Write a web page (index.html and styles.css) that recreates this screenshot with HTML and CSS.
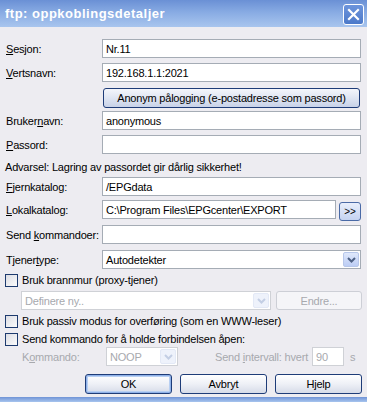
FILE: index.html
```html
<!DOCTYPE html>
<html lang="no">
<head>
  <meta charset="UTF-8">
  <title>ftp: oppkoblingsdetaljer</title>
  <link rel="stylesheet" href="styles.css">
</head>
<body>
  <div class="vindu">
    <div class="tittel">
      <span class="tittel-tekst">ftp: oppkoblingsdetaljer</span>
      <span class="lukk">
        <svg width="13" height="13" viewBox="0 0 13 13"><path d="M2 2 L11 11 M11 2 L2 11" stroke="#fff" stroke-width="2.2" stroke-linecap="square"/></svg>
      </span>
    </div>

    <div class="innhold">
      <div class="rad r-forste">
        <label class="etikett"><u>S</u>esjon:</label>
        <div class="felt">Nr.11</div>
      </div>

      <div class="rad">
        <label class="etikett"><u>V</u>ertsnavn:</label>
        <div class="felt">192.168.1.1:2021</div>
      </div>

      <div class="rad r-anonym">
        <span class="etikett"></span>
        <button class="knapp anonym">Anonym pålogging (e-postadresse som passord)</button>
      </div>

      <div class="rad r-tett">
        <label class="etikett">Bruker<u>n</u>avn:</label>
        <div class="felt">anonymous</div>
      </div>

      <div class="rad">
        <label class="etikett"><u>P</u>assord:</label>
        <div class="felt"></div>
      </div>

      <div class="advarsel">Advarsel: Lagring av passordet gir dårlig sikkerhet!</div>

      <div class="rad r-null">
        <label class="etikett"><u>F</u>jernkatalog:</label>
        <div class="felt">/EPGdata</div>
      </div>

      <div class="rad r-lokal">
        <label class="etikett"><u>L</u>okalkatalog:</label>
        <div class="felt kort">C:\Program Files\EPGcenter\EXPORT</div>
        <button class="knapp bla">&gt;&gt;</button>
      </div>

      <div class="rad r-seks">
        <label class="etikett">Send <u>k</u>ommandoer:</label>
        <div class="felt"></div>
      </div>

      <div class="rad r-seks">
        <label class="etikett">Tjener<u>t</u>ype:</label>
        <div class="felt valg">
          <span class="valg-tekst">Autodetekter</span>
          <span class="pil">
            <svg width="9" height="6" viewBox="0 0 9 6"><path d="M1 1 L4.5 4.5 L8 1" fill="none" stroke="#4d6185" stroke-width="2"/></svg>
          </span>
        </div>
      </div>

      <div class="sjekk r-brannmur">
        <span class="boks"></span>
        <span>Bruk brannmur (proxy-tjener)</span>
      </div>

      <div class="rad r-definere">
        <div class="felt valg av definere">
          <span class="valg-tekst">Definere ny..</span>
          <span class="pil av">
            <svg width="9" height="6" viewBox="0 0 9 6"><path d="M1 1 L4.5 4.5 L8 1" fill="none" stroke="#c3cee4" stroke-width="2"/></svg>
          </span>
        </div>
        <button class="knapp deaktiv endre">Endre...</button>
      </div>

      <div class="sjekk r-passiv">
        <span class="boks"></span>
        <span>Bruk passiv modus for overføring (som en WWW-leser)</span>
      </div>

      <div class="sjekk r-hold">
        <span class="boks"></span>
        <span>Send kommando for å holde forbindelsen åpen:</span>
      </div>

      <div class="rad r-kommando">
        <label class="etikett grå k-etikett">K<u>o</u>mmando:</label>
        <div class="felt valg av noop">
          <span class="valg-tekst">NOOP</span>
          <span class="pil av">
            <svg width="9" height="6" viewBox="0 0 9 6"><path d="M1 1 L4.5 4.5 L8 1" fill="none" stroke="#c3cee4" stroke-width="2"/></svg>
          </span>
        </div>
        <label class="grå intervall">Send <u>i</u>ntervall: hvert</label>
        <div class="felt av sekunder">90</div>
        <span class="grå enhet">s</span>
      </div>

      <div class="knapperad">
        <button class="knapp standard">OK</button>
        <button class="knapp">Avbryt</button>
        <button class="knapp">Hjelp</button>
      </div>
    </div>
    <div class="bunn"></div>
  </div>
</body>
</html>
```

FILE: styles.css
```css
body {
  margin: 0;
  background: #edecf1;
  font-family: 'Liberation Sans', Arial, sans-serif;
  font-size: 11px;
  letter-spacing: -0.2px;
  color: #000;
}

.vindu {
  width: 367px;
  height: 402px;
  display: flex;
  flex-direction: column;
  background: #edecf1;
}

.tittel {
  height: 27px;
  display: flex;
  align-items: center;
  justify-content: space-between;
  padding: 0 3px 0 5px;
  box-sizing: border-box;
  background: linear-gradient(#6a90d5, #88abe3 45%, #a8c5ee);
}

.tittel-tekst {
  color: #fff;
  font-weight: bold;
  font-size: 13px;
  letter-spacing: 0.5px;
}

.lukk {
  width: 19px;
  height: 19px;
  border: 1px solid #fff;
  border-radius: 3px;
  background: linear-gradient(#6d95dc, #4c79c9);
  display: flex;
  align-items: center;
  justify-content: center;
  margin-top: 1px;
}

.innhold {
  flex: 1;
  padding: 0 6px 0 5px;
  display: flex;
  flex-direction: column;
}

.rad {
  display: flex;
  align-items: center;
  height: 19px;
  margin-top: 5px;
  white-space: nowrap;
}

.r-forste { margin-top: 12px; }
.r-anonym { margin-top: 6px; height: 20px; }
.r-tett { margin-top: 3px; }
.r-null { margin-top: 0; }
.r-lokal { margin-top: 4px; }
.r-seks { margin-top: 6px; }

.etikett {
  width: 96px;
  flex: none;
  padding-left: 1px;
}

.felt {
  flex: 1;
  height: 19px;
  box-sizing: border-box;
  border: 1px solid #a5acb5;
  background: #fff;
  padding: 0 3px;
  display: flex;
  align-items: center;
  white-space: nowrap;
  overflow: hidden;
}

.felt.kort {
  flex: none;
  width: 234px;
}

.valg {
  padding-right: 1px;
}

.valg-tekst {
  flex: 1;
}

.pil {
  width: 16px;
  height: 15px;
  box-sizing: border-box;
  border: 1px solid #b7c7ea;
  border-radius: 2px;
  background: linear-gradient(#dfe8fb, #bccdf5);
  display: flex;
  align-items: center;
  justify-content: center;
}

.pil.av {
  border-color: #e3e9f6;
  background: #eef2fb;
}

.felt.av {
  border-color: #cfd1d6;
  color: #a7a9ae;
}

.advarsel {
  height: 20px;
  margin-top: 3px;
  display: flex;
  align-items: center;
}

.knapp {
  font-family: inherit;
  font-size: 11px;
  letter-spacing: -0.2px;
  color: #000;
  height: 20px;
  box-sizing: border-box;
  border: 1px solid #1e3c78;
  border-radius: 3px;
  background: linear-gradient(#ffffff, #eef0f6 50%, #d6dbe8);
  padding: 0;
  display: flex;
  align-items: center;
  justify-content: center;
}

.anonym {
  flex: 1;
  margin-left: 1px;
  margin-right: 1px;
  background: linear-gradient(#f4f6fb, #dfe5f2 50%, #c8d2e8);
}

.knapp.bla {
  width: 23px;
  height: 19px;
  margin-left: 3px;
  margin-top: 4px;
  border-color: #4a6aa6;
  background: linear-gradient(#e8eefb, #c5d3f1);
  font-size: 10px;
}

.sjekk {
  display: flex;
  align-items: center;
  gap: 4px;
  height: 16px;
  margin-top: 2px;
  white-space: nowrap;
}

.boks {
  width: 13px;
  height: 13px;
  box-sizing: border-box;
  border: 1px solid #1d3a6e;
  background: linear-gradient(135deg, #dcdde4, #fbfbfb);
  flex: none;
}

.r-brannmur { margin-top: 3px; }
.r-passiv { margin-top: 3px; }
.r-hold { margin-top: 2px; }

.r-definere {
  margin-top: 3px;
  padding-left: 16px;
}

.definere {
  flex: none;
  width: 250px;
}

.knapp.deaktiv {
  border-color: #cdcfd6;
  background: #f5f5f8;
  color: #a7a9ae;
}

.endre {
  width: 86px;
  height: 19px;
  margin-left: auto;
  margin-right: -1px;
}

.r-kommando {
  margin-top: 0;
}

.grå {
  color: #a7a9ae;
}

.k-etikett {
  width: 84px;
  padding-left: 17px;
}

.noop {
  flex: none;
  width: 72px;
}

.intervall {
  margin-left: 37px;
  width: 97px;
}

.sekunder {
  flex: none;
  width: 32px;
}

.enhet {
  margin-left: 6px;
}

.knapperad {
  display: flex;
  justify-content: flex-end;
  gap: 8px;
  margin-top: 8px;
  margin-right: -1px;
}

.knapperad .knapp {
  width: 87px;
}

.knapp.standard {
  border: 1px solid #1e3c78;
  box-shadow: inset 0 0 0 1px #8fb1e8, inset 0 0 0 2px #b8cff2;
}

.bunn {
  height: 5px;
  background: linear-gradient(#6f93d6, #a8c5ee);
}
```
